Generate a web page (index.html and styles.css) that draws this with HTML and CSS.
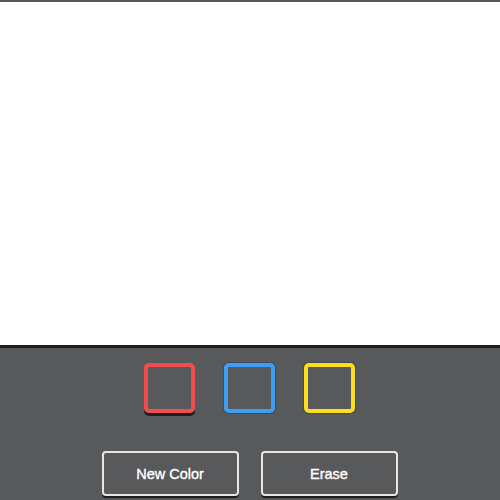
FILE: index.html
```html
<!DOCTYPE html>
<html>
<head>
<meta charset="utf-8">
<link rel="stylesheet" href="styles.css">
</head>
<body>
<div class="topbar"></div>
<div class="canvas"></div>
<div class="panel">
  <div class="swatches">
    <div class="swatch red selected"></div>
    <div class="swatch blue"></div>
    <div class="swatch yellow"></div>
  </div>
  <div class="buttons">
    <button class="btn">New Color</button>
    <button class="btn">Erase</button>
  </div>
</div>
</body>
</html>
```
FILE: styles.css
```css
html, body {
  margin: 0;
  padding: 0;
  width: 500px;
  height: 500px;
  overflow: hidden;
  font-family: "Liberation Sans", Arial, sans-serif;
}
.topbar {
  height: 2px;
  background: #555658;
}
.canvas {
  height: 343px;
  background: #ffffff;
}
.panel {
  height: 152px;
  background: #58595b;
  border-top: 3px solid #1f1f20;
  display: flex;
  flex-direction: column;
  align-items: center;
}
.swatches {
  display: flex;
  gap: 29px;
  margin-top: 15px;
  margin-right: 1px;
}
.swatch {
  width: 43px;
  height: 42px;
  border: 4px solid;
  border-radius: 5px;
  box-shadow: 0 0 0 1px rgba(40, 40, 70, 0.35);
}
.swatch.red { border-color: #f14d4d; }
.swatch.blue { border-color: #3d9ff4; }
.swatch.yellow { border-color: #fbdf1e; }
.swatch.selected {
  box-shadow: 0 3px 0 #1e1e1e;
}
.buttons {
  display: flex;
  gap: 22px;
  margin-top: 38px;
  margin-right: 1px;
}
.btn {
  width: 137px;
  height: 45px;
  background: #58595b;
  border: 2px solid #e6e6e6;
  border-radius: 4px;
  color: #ffffff;
  font-family: "Liberation Sans", Arial, sans-serif;
  font-size: 14.5px;
  -webkit-text-stroke: 0.35px #ffffff;
  box-shadow: 0 2px 0 #1e1e1e;
  padding: 0;
}
```
